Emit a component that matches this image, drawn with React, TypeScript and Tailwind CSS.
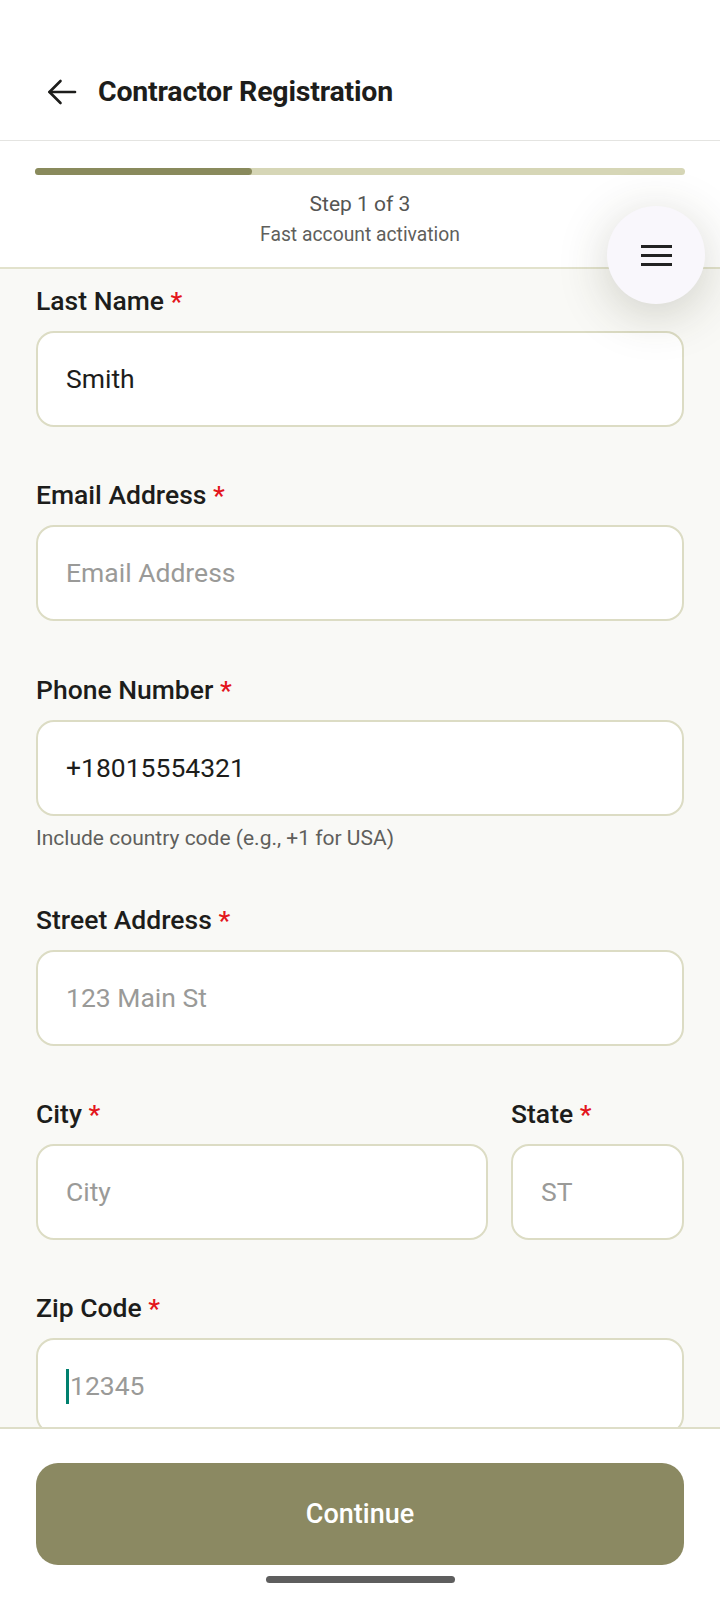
import React from "react";

type FieldProps = {
  label: string;
  value?: string;
  placeholder?: string;
  helper?: string;
  caret?: boolean;
  className?: string;
};

function Field({ label, value, placeholder, helper, caret, className }: FieldProps) {
  return (
    <div className={className}>
      <label className="block h-[30px] text-[26.5px] leading-[30px] font-medium text-[#1d1d1b]">
        {label} <span className="text-[#e3151c]">*</span>
      </label>
      <div className="mt-[15px] flex h-[96px] items-center rounded-[18px] border-2 border-[#dcdcc4] bg-white px-[28px]">
        {caret && <span className="mr-[1px] h-[35px] w-[3px] bg-[#00806e]" />}
        {value ? (
          <span className="text-[26.5px] text-[#1d1d1b]">{value}</span>
        ) : (
          <span className="text-[26.5px] text-[#9a9a98]">{placeholder}</span>
        )}
      </div>
      {helper && (
        <p className="mt-[9px] text-[21px] leading-[26px] text-[#5f5f5c]">{helper}</p>
      )}
    </div>
  );
}

export default function App() {
  return (
    <div className="relative flex h-[1600px] w-[720px] flex-col overflow-hidden bg-[#f9f9f6] font-['Roboto',sans-serif]">
      <header className="h-[141px] border-b border-[#e4e4e1] bg-white shadow-[0_2px_5px_rgba(0,0,0,0.05)]">
        <div className="mt-[70px] flex h-[44px] items-center pl-[47px]">
          <svg width="30" height="26" viewBox="0 0 30 26" fill="none" stroke="#1d1d1b" strokeWidth="2.6" strokeLinecap="round" strokeLinejoin="round">
            <path d="M28 13H2.5" />
            <path d="M13.5 2L2.5 13l11 11" />
          </svg>
          <h1 className="ml-[21px] text-[28.5px] font-bold tracking-[-0.2px] text-[#1d1d1b]">
            Contractor Registration
          </h1>
        </div>
      </header>

      <section className="border-b-2 border-[#e2e2cc] bg-white px-[35px] pb-[20px] pt-[27px]">
        <div className="h-[7px] w-full rounded-full bg-[#d6d6b6]">
          <div className="h-[7px] w-1/3 rounded-full bg-[#898a5c]" />
        </div>
        <p className="mt-[16px] text-center text-[21px] leading-[26px] text-[#555553]">Step 1 of 3</p>
        <p className="mt-[6px] text-center text-[19.3px] leading-[24px] text-[#5f5f5c]">
          Fast account activation
        </p>
      </section>

      <main className="flex-1 overflow-hidden px-[36px] pt-[17px]">
        <Field label="Last Name" value="Smith" />
        <Field className="mt-[53px]" label="Email Address" placeholder="Email Address" />
        <Field
          className="mt-[54px]"
          label="Phone Number"
          value="+18015554321"
          helper="Include country code (e.g., +1 for USA)"
        />
        <Field className="mt-[54px]" label="Street Address" placeholder="123 Main St" />
        <div className="mt-[53px] flex gap-[23px]">
          <Field className="flex-1" label="City" placeholder="City" />
          <Field className="w-[173px]" label="State" placeholder="ST" />
        </div>
        <Field className="mt-[53px]" label="Zip Code" placeholder="12345" caret />
      </main>

      <footer className="h-[173px] border-t-2 border-[#dedec8] bg-white px-[36px] pt-[34px]">
        <button className="flex h-[102px] w-full items-center justify-center rounded-[22px] bg-[#8b8962] text-[27px] font-medium text-white">
          Continue
        </button>
        <div className="mx-auto mt-[11px] h-[7px] w-[189px] rounded-full bg-[#5e5e5e]" />
      </footer>

      <button className="absolute left-[607px] top-[206px] flex h-[98px] w-[98px] flex-col items-center justify-center gap-[6px] rounded-full bg-[#f9f7fc] shadow-[0_10px_50px_rgba(60,60,30,0.22)]">
        <span className="h-[3px] w-[31px] bg-[#222]" />
        <span className="h-[3px] w-[31px] bg-[#222]" />
        <span className="h-[3px] w-[31px] bg-[#222]" />
      </button>
    </div>
  );
}
